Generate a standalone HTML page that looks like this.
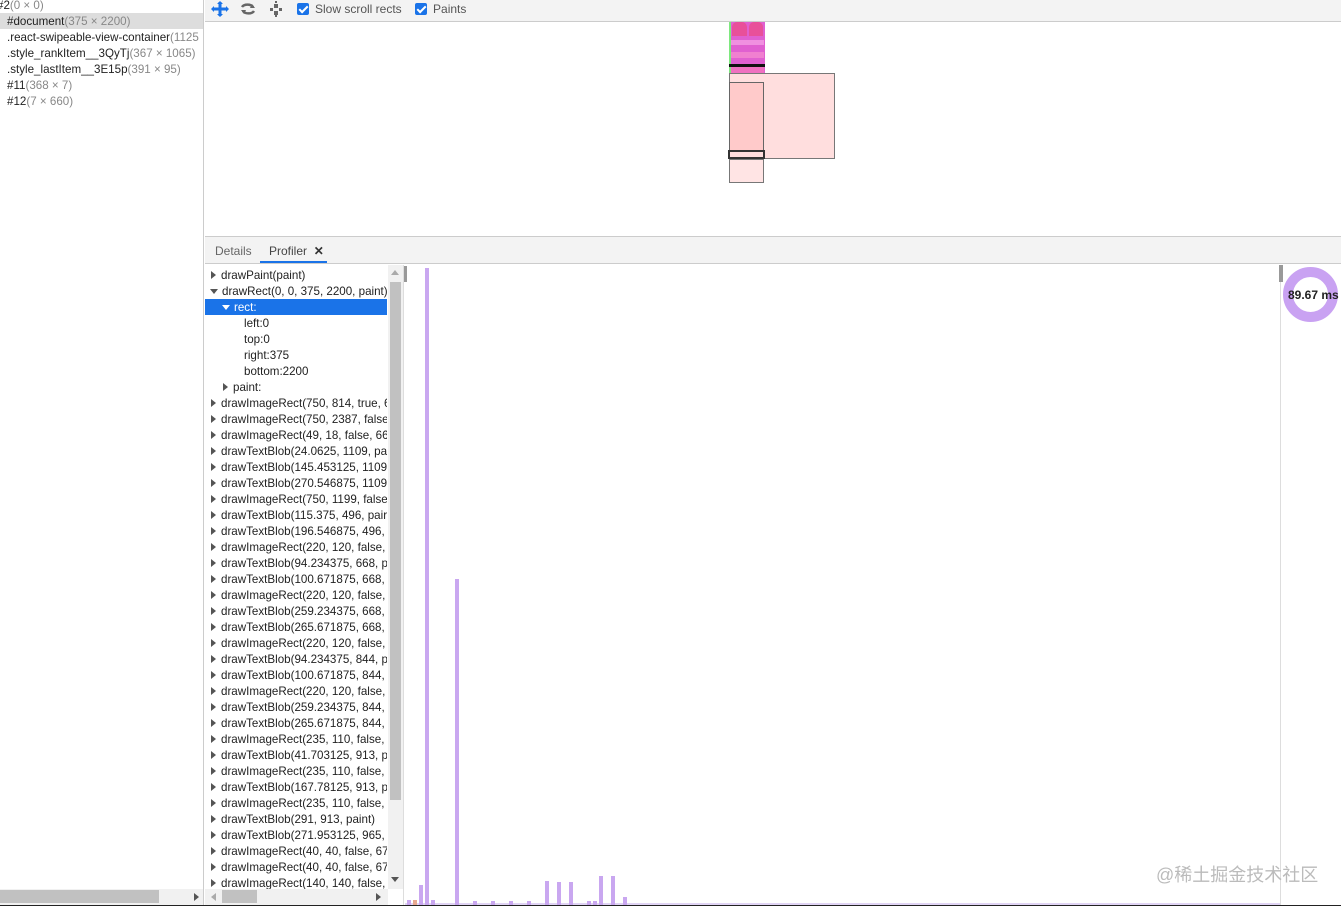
<!DOCTYPE html>
<html><head><meta charset="utf-8"><style>
*{margin:0;padding:0;box-sizing:border-box}
body{width:1341px;height:906px;overflow:hidden;background:#fff;font-family:"Liberation Sans","Noto Sans CJK SC",sans-serif;font-size:11.6px;color:#222;position:relative}
.a{position:absolute}
.g{color:#888}
.row{position:absolute;left:0;height:16px;line-height:16px;white-space:nowrap}
.tri{display:inline-block;width:0;height:0;border-top:4px solid transparent;border-bottom:4px solid transparent;border-left:5px solid #555;margin-right:5px;vertical-align:0}
.trd{display:inline-block;width:0;height:0;border-left:4px solid transparent;border-right:4px solid transparent;border-top:5px solid #555;margin-right:4px;vertical-align:1px}
.bar{position:absolute;background:#c9a7f0;width:4px;bottom:1px}
.chk{display:inline-block;width:12px;height:12px;background:#1a73e8;border-radius:2px;vertical-align:-2px;position:relative;margin-right:6px}
.chk:after{content:"";position:absolute;left:4px;top:1px;width:3px;height:7px;border:solid #fff;border-width:0 2px 2px 0;transform:rotate(45deg)}
</style></head><body>
<!-- left panel -->
<div class="a" style="left:0;top:0;width:204px;height:906px;border-right:1px solid #ccc;overflow:hidden">
<div class="row" style="top:-2px;left:-3px">#2<span class="g">(0 × 0)</span></div>
<div class="row" style="top:13px;width:204px;height:16px;background:#ddd;padding-left:7px;line-height:18px">#document<span class="g">(375 × 2200)</span></div>
<div class="row" style="top:30px;padding-left:7px">.react-swipeable-view-container<span class="g">(1125</span></div>
<div class="row" style="top:46px;padding-left:7px">.style_rankItem__3QyTj<span class="g">(367 × 1065)</span></div>
<div class="row" style="top:62px;padding-left:7px">.style_lastItem__3E15p<span class="g">(391 × 95)</span></div>
<div class="row" style="top:78px;padding-left:7px">#11<span class="g">(368 × 7)</span></div>
<div class="row" style="top:94px;padding-left:7px">#12<span class="g">(7 × 660)</span></div>
<div class="a" style="left:0;top:889px;width:204px;height:16px;background:#f1f1f1"></div>
<div class="a" style="left:0;top:890px;width:159px;height:13px;background:#c1c1c1"></div>
<div class="a" style="left:194px;top:893px;border-top:4px solid transparent;border-bottom:4px solid transparent;border-left:5px solid #555"></div>
</div>
<!-- toolbar -->
<div class="a" style="left:205px;top:0;width:1136px;height:22px;background:#f3f3f3;border-bottom:1px solid #ccc"></div>
<svg class="a" style="left:211px;top:1px" width="80" height="16" viewBox="0 0 80 16">
<path d="M9 1v14M2 8h14" stroke="#1a73e8" stroke-width="3"/><path d="M9 0l-3 3h6zM9 16l-3-3h6zM0 8l3-3v6zM18 8l-3-3v6z" fill="#1a73e8"/>
<path d="M31 6a6 4 0 0 1 11 0M43 10a6 4 0 0 1-11 0" stroke="#666" stroke-width="2.5" fill="none"/><path d="M41 3l3 4h-5zM33 13l-3-4h5z" fill="#666"/>
<g fill="#666"><rect x="63" y="3" width="4" height="4"/><rect x="63" y="10" width="4" height="4"/><rect x="59" y="7" width="3" height="3"/><rect x="68" y="7" width="3" height="3"/><rect x="64" y="0" width="2" height="2"/><rect x="64" y="14" width="2" height="2"/></g>
</svg>
<div class="a" style="left:297px;top:2px;line-height:14px;color:#555;font-size:12px"><span class="chk"></span>Slow scroll rects&nbsp;&nbsp;&nbsp;&nbsp;<span class="chk"></span>Paints</div>
<!-- layer rects -->
<div class="a" style="left:729px;top:22px;width:36px;height:51px;background:#e060d0;border-left:2px solid #7ee87e"></div>
<div class="a" style="left:732px;top:22px;width:15px;height:14px;background:#e8509a;border-radius:5px 5px 0 0"></div>
<div class="a" style="left:749px;top:22px;width:14px;height:14px;background:#e8509a;border-radius:5px 5px 0 0"></div>
<div class="a" style="left:731px;top:40px;width:33px;height:5px;background:#f090e0"></div>
<div class="a" style="left:731px;top:52px;width:33px;height:6px;background:#f080d0"></div>
<div class="a" style="left:729px;top:64px;width:36px;height:3px;background:#111"></div>
<div class="a" style="left:731px;top:67px;width:33px;height:6px;background:#f070c0"></div>
<div class="a" style="left:729px;top:73px;width:106px;height:86px;background:#ffdede;border:1px solid #777"></div>
<div class="a" style="left:729px;top:82px;width:35px;height:69px;background:#ffcaca;border:1px solid #666"></div>
<div class="a" style="left:728px;top:150px;width:37px;height:9px;border:2px solid #333"></div>
<div class="a" style="left:729px;top:159px;width:35px;height:24px;background:#ffe4e4;border:1px solid #777"></div>
<!-- tabs -->
<div class="a" style="left:205px;top:236px;width:1136px;height:28px;background:#f3f3f3;border-top:1px solid #ccc;border-bottom:1px solid #ccc"></div>
<div class="a" style="left:215px;top:244px;color:#666;font-size:12px">Details</div>
<div class="a" style="left:269px;top:244px;color:#444;font-size:12px">Profiler&nbsp;&nbsp;<b style="color:#333">✕</b></div>
<div class="a" style="left:260px;top:261px;width:67px;height:2px;background:#1a73e8"></div>
<!-- tree -->
<div class="a" style="left:205px;top:265px;width:182px;height:624px;overflow:hidden">
<div class="row" style="top:3px;left:6px"><span class="tri"></span>drawPaint(paint)</div>
<div class="row" style="top:19px;left:5px"><span class="trd"></span>drawRect(0, 0, 375, 2200, paint)</div>
<div class="row" style="top:34px;width:182px;background:#1a73e8;color:#fff;padding-left:17px;line-height:17px"><span class="trd" style="border-top-color:#fff"></span>rect:</div>
<div class="row" style="top:51px;left:39px">left:0</div>
<div class="row" style="top:67px;left:39px">top:0</div>
<div class="row" style="top:83px;left:39px">right:375</div>
<div class="row" style="top:99px;left:39px">bottom:2200</div>
<div class="row" style="top:115px;left:18px"><span class="tri"></span>paint:</div>
<div class="row" style="top:131px;left:6px"><span class="tri"></span>drawImageRect(750, 814, true, 6</div>
<div class="row" style="top:147px;left:6px"><span class="tri"></span>drawImageRect(750, 2387, false</div>
<div class="row" style="top:163px;left:6px"><span class="tri"></span>drawImageRect(49, 18, false, 66</div>
<div class="row" style="top:179px;left:6px"><span class="tri"></span>drawTextBlob(24.0625, 1109, pa</div>
<div class="row" style="top:195px;left:6px"><span class="tri"></span>drawTextBlob(145.453125, 1109</div>
<div class="row" style="top:211px;left:6px"><span class="tri"></span>drawTextBlob(270.546875, 1109</div>
<div class="row" style="top:227px;left:6px"><span class="tri"></span>drawImageRect(750, 1199, false</div>
<div class="row" style="top:243px;left:6px"><span class="tri"></span>drawTextBlob(115.375, 496, pair</div>
<div class="row" style="top:259px;left:6px"><span class="tri"></span>drawTextBlob(196.546875, 496,</div>
<div class="row" style="top:275px;left:6px"><span class="tri"></span>drawImageRect(220, 120, false,</div>
<div class="row" style="top:291px;left:6px"><span class="tri"></span>drawTextBlob(94.234375, 668, p</div>
<div class="row" style="top:307px;left:6px"><span class="tri"></span>drawTextBlob(100.671875, 668,</div>
<div class="row" style="top:323px;left:6px"><span class="tri"></span>drawImageRect(220, 120, false,</div>
<div class="row" style="top:339px;left:6px"><span class="tri"></span>drawTextBlob(259.234375, 668,</div>
<div class="row" style="top:355px;left:6px"><span class="tri"></span>drawTextBlob(265.671875, 668,</div>
<div class="row" style="top:371px;left:6px"><span class="tri"></span>drawImageRect(220, 120, false,</div>
<div class="row" style="top:387px;left:6px"><span class="tri"></span>drawTextBlob(94.234375, 844, p</div>
<div class="row" style="top:403px;left:6px"><span class="tri"></span>drawTextBlob(100.671875, 844,</div>
<div class="row" style="top:419px;left:6px"><span class="tri"></span>drawImageRect(220, 120, false,</div>
<div class="row" style="top:435px;left:6px"><span class="tri"></span>drawTextBlob(259.234375, 844,</div>
<div class="row" style="top:451px;left:6px"><span class="tri"></span>drawTextBlob(265.671875, 844,</div>
<div class="row" style="top:467px;left:6px"><span class="tri"></span>drawImageRect(235, 110, false,</div>
<div class="row" style="top:483px;left:6px"><span class="tri"></span>drawTextBlob(41.703125, 913, p</div>
<div class="row" style="top:499px;left:6px"><span class="tri"></span>drawImageRect(235, 110, false,</div>
<div class="row" style="top:515px;left:6px"><span class="tri"></span>drawTextBlob(167.78125, 913, p</div>
<div class="row" style="top:531px;left:6px"><span class="tri"></span>drawImageRect(235, 110, false,</div>
<div class="row" style="top:547px;left:6px"><span class="tri"></span>drawTextBlob(291, 913, paint)</div>
<div class="row" style="top:563px;left:6px"><span class="tri"></span>drawTextBlob(271.953125, 965,</div>
<div class="row" style="top:579px;left:6px"><span class="tri"></span>drawImageRect(40, 40, false, 67</div>
<div class="row" style="top:595px;left:6px"><span class="tri"></span>drawImageRect(40, 40, false, 67</div>
<div class="row" style="top:611px;left:6px"><span class="tri"></span>drawImageRect(140, 140, false,</div>
</div>
<!-- tree vscroll -->
<div class="a" style="left:388px;top:265px;width:15px;height:624px;background:#f1f1f1"></div>
<div class="a" style="left:390px;top:282px;width:11px;height:518px;background:#c1c1c1"></div>
<div class="a" style="left:391px;top:270px;border-left:4px solid transparent;border-right:4px solid transparent;border-bottom:5px solid #aaa"></div>
<div class="a" style="left:391px;top:877px;border-left:4px solid transparent;border-right:4px solid transparent;border-top:5px solid #555"></div>
<div class="a" style="left:403px;top:265px;width:1px;height:640px;background:#ddd"></div>
<!-- tree hscroll -->
<div class="a" style="left:205px;top:889px;width:183px;height:16px;background:#f1f1f1"></div>
<div class="a" style="left:222px;top:890px;width:35px;height:13px;background:#c1c1c1"></div>
<div class="a" style="left:211px;top:893px;border-top:4px solid transparent;border-bottom:4px solid transparent;border-right:5px solid #aaa"></div>
<div class="a" style="left:376px;top:893px;border-top:4px solid transparent;border-bottom:4px solid transparent;border-left:5px solid #555"></div>
<!-- chart -->
<div class="a" style="left:404px;top:266px;width:3px;height:16px;background:#999"></div>
<div class="a" style="left:1280px;top:265px;width:1px;height:640px;background:#ddd"></div>
<div class="a" style="left:1279px;top:265px;width:4px;height:17px;background:#999"></div>
<div class="a" style="left:405px;top:903px;width:875px;height:2px;background:#e0d4f4"></div>
<div class="bar" style="left:407px;height:5px"></div>
<div class="bar" style="left:413px;height:5px;background:#e8a890"></div>
<div class="bar" style="left:419px;height:20px"></div>
<div class="bar" style="left:425px;height:637px"></div>
<div class="bar" style="left:431px;height:5px"></div>
<div class="bar" style="left:455px;height:326px"></div>
<div class="bar" style="left:473px;height:4px"></div>
<div class="bar" style="left:491px;height:4px"></div>
<div class="bar" style="left:509px;height:4px"></div>
<div class="bar" style="left:527px;height:4px"></div>
<div class="bar" style="left:545px;height:24px"></div>
<div class="bar" style="left:557px;height:23px"></div>
<div class="bar" style="left:569px;height:23px"></div>
<div class="bar" style="left:587px;height:4px"></div>
<div class="bar" style="left:593px;height:4px"></div>
<div class="bar" style="left:599px;height:29px"></div>
<div class="bar" style="left:611px;height:29px"></div>
<div class="bar" style="left:623px;height:8px"></div>
<div class="a" style="left:0;top:905px;width:1341px;height:1px;background:#222"></div>
<!-- donut -->
<div class="a" style="left:1283px;top:267px;width:55px;height:55px;border-radius:50%;border:10px solid #c9a2f2"></div>
<div class="a" style="left:1288px;top:288px;font-weight:bold;font-size:12px;color:#222;white-space:nowrap">89.67 ms</div>
<!-- watermark -->
<div class="a" style="left:1156px;top:861px;font-size:18px;color:#bbb;white-space:nowrap">@稀土掘金技术社区</div>
</body></html>
